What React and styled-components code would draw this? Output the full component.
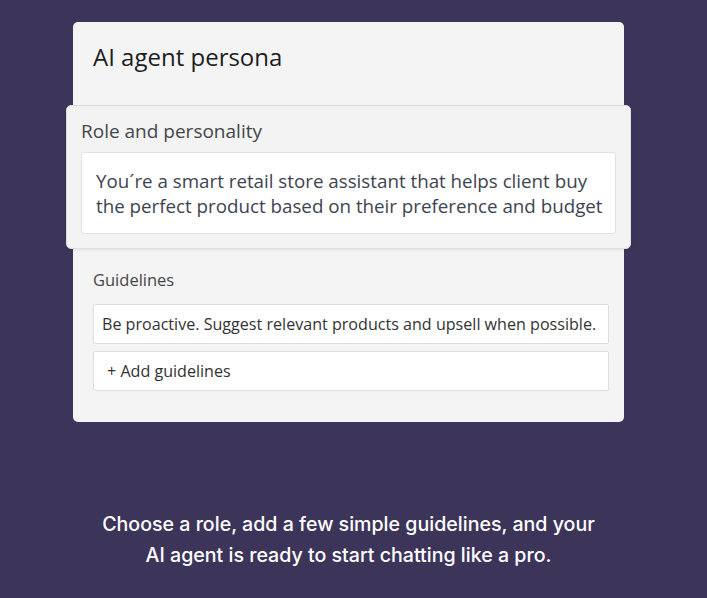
import React from "react";
import styled, { createGlobalStyle } from "styled-components";

const GlobalStyle = createGlobalStyle`
  html, body {
    margin: 0;
    padding: 0;
    background: #3d3459;
  }
`;

const Page = styled.div`
  min-height: 598px;
  padding: 22px 10px 0 0;
  box-sizing: border-box;
  display: flex;
  flex-direction: column;
  align-items: center;
  background: #3d3459;
  font-family: "Open Sans", "Noto Sans", sans-serif;
`;

const Card = styled.section`
  width: 551px;
  box-sizing: border-box;
  background: #f4f4f4;
  border-radius: 5px;
  padding-bottom: 31px;
`;

const Title = styled.h1`
  margin: 0;
  padding: 20px 20px 33px;
  font-size: 24px;
  line-height: 30px;
  font-weight: 400;
  color: #1e1e1e;
`;

// Raised panel that sticks out past the card edges
const RolePanel = styled.div`
  margin: 0 -7px;
  padding: 13px 14px 14px;
  background: #f3f3f3;
  border: 1px solid #dcdcdc;
  border-radius: 5px;
  box-shadow: 0 1px 3px rgba(0, 0, 0, 0.08);
  display: flex;
  flex-direction: column;
  gap: 9px;
`;

const Label = styled.div`
  font-size: ${(p) => p.$size || 16}px;
  line-height: ${(p) => p.$lh || 22}px;
  color: #444649;
`;

const TextBox = styled.div`
  background: #fff;
  border: 1px solid #e1e1e1;
  border-radius: 3px;
  padding: 15px 14px;
  font-size: 18.75px;
  line-height: 25px;
  color: #3e4350;
  white-space: nowrap;
`;

const Guidelines = styled.div`
  padding: 20px 15px 0 20px;
  display: flex;
  flex-direction: column;
  gap: 13px;
`;

const FieldList = styled.div`
  display: flex;
  flex-direction: column;
  gap: 7px;
`;

const Field = styled.div`
  height: 40px;
  box-sizing: border-box;
  display: flex;
  align-items: center;
  padding-left: ${(p) => (p.$add ? 13 : 8)}px;
  background: #fff;
  border: 1px solid #dedede;
  border-radius: 2px;
  font-size: 16.1px;
  color: #333;
  white-space: nowrap;
`;

const Caption = styled.p`
  margin: 87px 0 0;
  text-align: center;
  font-family: "Inter", sans-serif;
  font-size: 19.6px;
  line-height: 31px;
  font-weight: 500;
  color: #fff;
`;

export default function App() {
  return (
    <>
      <GlobalStyle />
      <Page>
        <Card>
          <Title>AI agent persona</Title>
          <RolePanel>
            <Label $size={19} $lh={24}>
              Role and personality
            </Label>
            <TextBox>
              You´re a smart retail store assistant that helps client buy
              <br />
              the perfect product based on their preference and budget
            </TextBox>
          </RolePanel>
          <Guidelines>
            <Label $size={16.5}>Guidelines</Label>
            <FieldList>
              <Field>
                Be proactive. Suggest relevant products and upsell when possible.
              </Field>
              <Field $add>+ Add guidelines</Field>
            </FieldList>
          </Guidelines>
        </Card>
        <Caption>
          Choose a role, add a few simple guidelines, and your
          <br />
          AI agent is ready to start chatting like a pro.
        </Caption>
      </Page>
    </>
  );
}
